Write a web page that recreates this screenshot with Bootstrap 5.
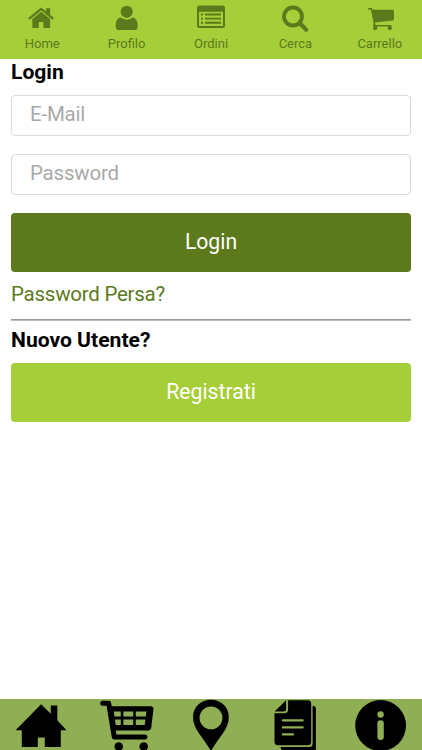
<!DOCTYPE html>
<html lang="it">
<head>
<meta charset="utf-8">
<meta name="viewport" content="width=device-width, initial-scale=1">
<title>Login</title>
<link rel="stylesheet" href="https://cdn.jsdelivr.net/npm/bootstrap@5.3.0/dist/css/bootstrap.min.css">
<style>
body{font-family:Roboto,"Liberation Sans",sans-serif;font-size:20.5px;line-height:26px;color:#000;background:#fff;overflow:hidden}
.topbar{height:58.5px;background:#a6ce39}
.topbar a{color:#5c7a1c;font-size:13px;line-height:18px;padding-top:3px}
.topbar svg{width:34px;height:32px;display:block}
.content-area{padding:0 11px}
.title{font-size:21.1px;line-height:26px;font-weight:700}
.field{height:41px;border:1px solid #d9d9d9;border-radius:4px;padding:0 18px 3px;font-size:20.5px;letter-spacing:-.2px;color:#000}
.field::placeholder{color:#a9a9a9;opacity:1}
.field-gap{margin-bottom:18px}
.first-form{margin-top:10px}
.action{height:59px;border:0;border-radius:4px;font-size:21.2px;color:#fff;padding:0 0 1px}
.action-dark,.action-dark:hover{background:#5c7a1c;color:#fff}
.action-light,.action-light:hover{background:#a6ce39;color:#fff}
.lost{color:#5c7a1c;margin-top:9px;letter-spacing:-.25px}
.rule{margin:12px 0 6px;border:0;height:2px;background:linear-gradient(#999 50%,#bbb 50%);opacity:1}
.register{margin-top:10px}
.bottombar{height:51.5px;background:#90ae54}
.bottombar svg{width:64px;height:51.5px;display:block}
</style>
<script src="https://cdn.jsdelivr.net/npm/bootstrap@5.3.0/dist/js/bootstrap.bundle.min.js"></script>
</head>
<body class="d-flex flex-column vh-100">
<nav class="topbar d-flex flex-shrink-0">
  <a href="#" class="col d-flex flex-column align-items-center text-decoration-none">
    <svg viewBox="25.2 3 34 32" fill="#5c7a1c"><path d="M29.8 18.3 41.3 8.8 52.8 18.3" fill="none" stroke="#5c7a1c" stroke-width="2.3" stroke-linejoin="round" stroke-linecap="round"/><path d="M46.3 8.2H50.3V15.2L46.3 11.8ZM41.3 11.7 50.3 19V27.2Q50.3 28 49.5 28H43.6V22H39V28H33.3Q32.5 28 32.5 27.2V19Z"/></svg>
    <span>Home</span></a>
  <a href="#" class="col d-flex flex-column align-items-center text-decoration-none">
    <svg viewBox="109.6 3 34 32" fill="#5c7a1c"><circle cx="126.3" cy="11.8" r="6.1"/><path d="M120 17.6Q126.3 21.7 132.600 17.6C135.8 18.2 137.3 21.6 137.3 26.4Q137.3 30 133.6 30H119Q115.3 30 115.3 26.4C115.3 21.6 116.8 18.2 120 17.6Z"/></svg>
    <span>Profilo</span></a>
  <a href="#" class="col d-flex flex-column align-items-center text-decoration-none">
    <svg viewBox="194 3 34 32" fill="#5c7a1c"><path fill-rule="evenodd" d="M199.5 5.5H222.5Q225 5.5 225 8V25.5Q225 28 222.5 28H199.5Q197 28 197 25.5V8Q197 5.5 199.5 5.5ZM199 11.8V25.2Q199 26 199.8 26H222.2Q223 26 223 25.2V11.8Z"/><path d="M201 13.6h2v1.9h-2zm4 0h16v1.9h-16zm-4 4.1h2v1.9h-2zm4 0h16v1.9h-16zm-4 4.1h2v1.9h-2zm4 0h16v1.9h-16z"/></svg>
    <span>Ordini</span></a>
  <a href="#" class="col d-flex flex-column align-items-center text-decoration-none">
    <svg viewBox="278.4 3 34 32" fill="none" stroke="#5c7a1c"><circle cx="293.4" cy="16.5" r="9" stroke-width="3.8"/><path d="m300.2 23.3 6.4 6.4" stroke-width="4.2" stroke-linecap="round"/></svg>
    <span>Cerca</span></a>
  <a href="#" class="col d-flex flex-column align-items-center text-decoration-none">
    <svg viewBox="362.8 3 34 32" fill="#5c7a1c"><path d="M368.2 8H371.2Q372.2 8 372.5 9.7H392.6Q393.8 9.7 393.8 10.9V19Q393.8 20.3 392.5 20.5L375 22.6 375.2 25H390.5Q391.4 25.2 391.4 26.500H373.8Q372.7 26.500 373 24.8L373.5 23 370.7 9.8H368.2Q367.2 8.9 368.2 8Z"/><circle cx="375" cy="28" r="2.2"/><circle cx="389.6" cy="28" r="2.2"/></svg>
    <span>Carrello</span></a>
</nav>
<main class="content-area flex-grow-1">
  <h1 class="title mb-0">Login</h1>
  <form class="first-form" onsubmit="return false">
    <input class="field field-gap form-control" type="email" placeholder="E-Mail" aria-label="E-Mail">
    <input class="field field-gap form-control" type="password" placeholder="Password" aria-label="Password">
    <button class="action action-dark btn w-100 d-block" type="submit">Login</button>
  </form>
  <a href="#" class="lost d-block text-decoration-none">Password Persa?</a>
  <hr class="rule">
  <h2 class="title mb-0">Nuovo Utente?</h2>
  <button class="action action-light register btn w-100 d-block" type="button">Registrati</button>
</main>
<footer class="bottombar d-flex flex-shrink-0">
  <a href="#" class="col d-flex justify-content-center" aria-label="Home">
    <svg viewBox="10.2 698.5 64 51.5"><path d="M41.3 703.7 51 713.3V705H57.5V719.8L66.7 729.8H61V746.6H45V737H38V746.6H22V729.8H15.8Z"/></svg></a>
  <a href="#" class="col d-flex justify-content-center" aria-label="Carrello">
    <svg viewBox="94.6 698.5 64 51.5"><path d="M102.3 702.8H108.3L113.9 736.500H144.5" fill="none" stroke="#000" stroke-width="5" stroke-linecap="round" stroke-linejoin="round"/><path fill-rule="evenodd" d="M109 705.8H150.5Q153.3 706 153 709L150.8 727.6Q150.5 730 148 730H113ZM113.4 711 114.1 716H120.4V711ZM123 711V716H132.8V711ZM135.4 711V716H145.4L146 711ZM114.5 719 115.3 724.6H120.4V719ZM123 719V724.6H132.8V719ZM135.4 719V724.6H144.3L145 719Z"/><circle cx="118.3" cy="746" r="4.3"/><circle cx="143.3" cy="746" r="4.3"/></svg></a>
  <a href="#" class="col d-flex justify-content-center" aria-label="Negozi">
    <svg viewBox="179 698.5 64 51.5"><path fill-rule="evenodd" d="M211 699.3C220.7 699.3 228.8 706.5 228.8 716.5C228.8 729 218.5 737 211 750.5C203.5 737 193 729 193 716.5C193 706.5 201.3 699.3 211 699.3ZM211 706A11.4 11.4 0 1 0 211 728.8A11.4 11.4 0 1 0 211 706Z"/></svg></a>
  <a href="#" class="col d-flex justify-content-center" aria-label="Documenti">
    <svg viewBox="263.4 698.5 64 51.5"><path d="M313 705.3Q316.3 705.3 316.3 708.5V750H284Q281 749.8 281 746.5H309.5Q313 746.5 313 743Z"/><path d="M288.5 699.7H308Q311.6 699.7 311.6 703.3V741.2Q311.6 744.8 308 744.8H278.5Q274.9 744.8 274.9 741.2V712.8H284.5Q288.5 712.8 288.5 708.8Z"/><path d="M286.500 699.800V708.800Q286.500 711 284.300 711H275Z"/><path d="M283.3 719.8H303M283.3 726.9H303M283.3 733.9H293.3" stroke="#90ae54" stroke-width="2.3" stroke-linecap="round"/></svg></a>
  <a href="#" class="col d-flex justify-content-center" aria-label="Informazioni">
    <svg viewBox="347.8 698.5 64 51.5"><circle cx="380.4" cy="725" r="25.4"/><circle cx="380.4" cy="714" r="3.2" fill="#90ae54"/><path d="M380.4 723V736.3" stroke="#90ae54" stroke-width="6.4" stroke-linecap="round"/></svg></a>
</footer>
</body>
</html>
